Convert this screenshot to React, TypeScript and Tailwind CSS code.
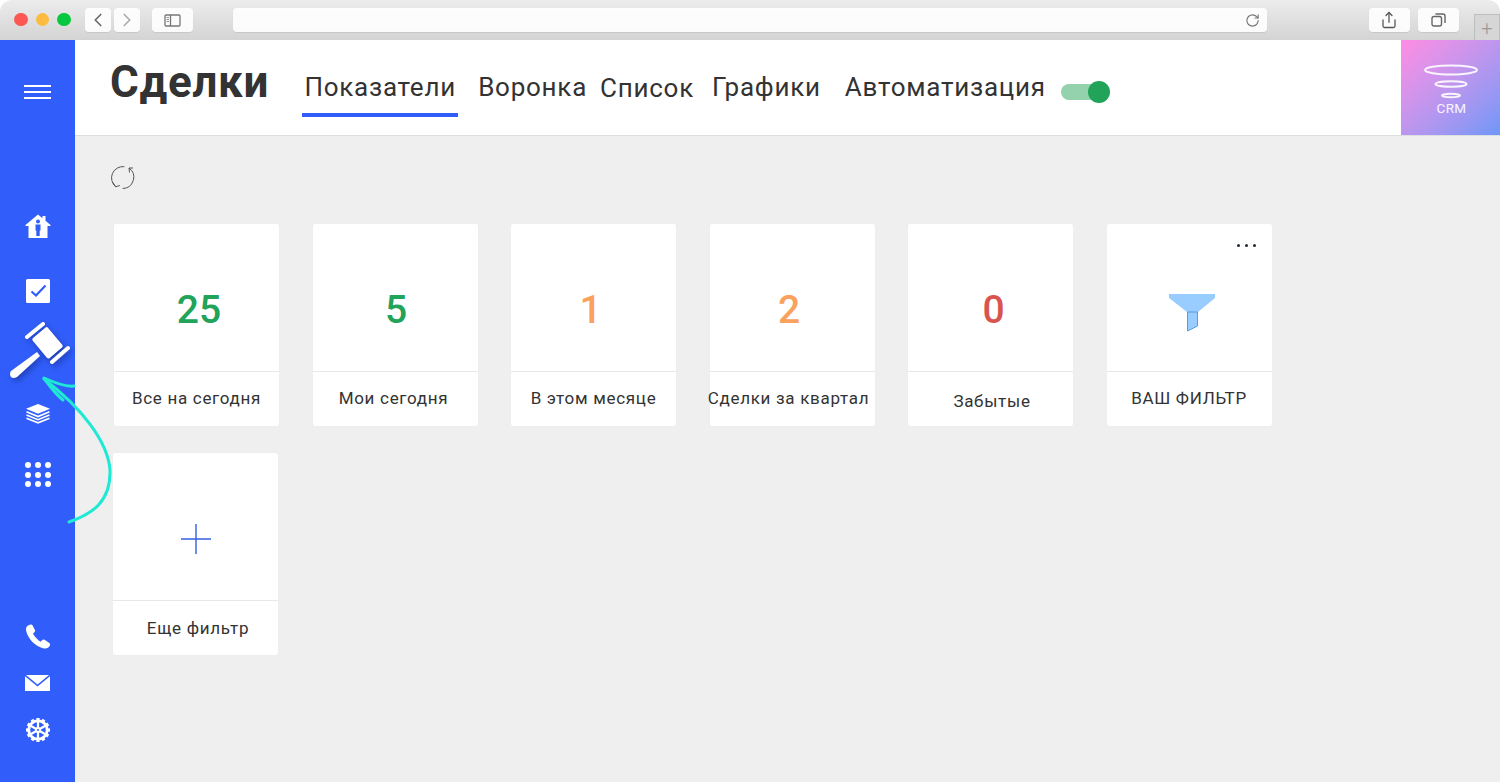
import React from "react";
import { ChevronLeft, ChevronRight, RotateCw, Share } from "lucide-react";

const cards = [
  { n: "25", c: "text-[#21a35a]", label: "Все на сегодня", nx: "ml-[5px]", lx: "" },
  { n: "5", c: "text-[#21a35a]", label: "Мои сегодня", nx: "ml-[2px]", lx: "pr-[3px]" },
  { n: "1", c: "text-[#f9a15d]", label: "В этом месяце", nx: "mr-[6px]", lx: "" },
  { n: "2", c: "text-[#f9a15d]", label: "Сделки за квартал", nx: "mr-[6px]", lx: "pr-[7px]" },
  { n: "0", c: "text-[#d9534f]", label: "Забытые", nx: "ml-[6px]", lx: "pl-[3px] pt-[5px]" },
];

function ToolBtn({ className, children }: { className: string; children: React.ReactNode }) {
  return (
    <div className={"flex items-center justify-center rounded-[4px] bg-white/90 h-[24px] shadow-[0_1px_1px_rgba(0,0,0,0.08)] " + className}>
      {children}
    </div>
  );
}

function Card({ top, label, labelClass = "" }: { top: React.ReactNode; label: string; labelClass?: string }) {
  return (
    <div className="w-[165px] h-[202px] bg-white rounded-[2px] flex flex-col shadow-[0_0_1px_rgba(0,0,0,0.05)]">
      <div className="h-[148px] border-b border-[#e8e8e8] flex items-center justify-center relative">{top}</div>
      <div className={"flex-1 flex items-center justify-center text-[17px] tracking-[0.7px] text-[#333] whitespace-nowrap " + labelClass}>
        {label}
      </div>
    </div>
  );
}

export default function App() {
  return (
    <div className="w-[1500px] h-[782px] overflow-hidden bg-white flex flex-col font-['Roboto',sans-serif]">
      {/* browser bar */}
      <div className="h-[40px] shrink-0 rounded-t-[12px] bg-gradient-to-b from-[#ececec] to-[#d4d4d4] flex items-center pl-[14px] pr-[12px] relative">
        <div className="flex gap-[8px] -mt-[1px]">
          <div className="w-[13.500px] h-[13.500px] rounded-full bg-[#fc5753]" />
          <div className="w-[13.500px] h-[13.500px] rounded-full bg-[#fdbc40]" />
          <div className="w-[13.500px] h-[13.500px] rounded-full bg-[#05c840]" />
        </div>
        <div className="flex gap-[3px] ml-[14px]">
          <ToolBtn className="w-[26px]"><ChevronLeft size={22} strokeWidth={1.8} className="text-[#666]" /></ToolBtn>
          <ToolBtn className="w-[26px]"><ChevronRight size={22} strokeWidth={1.8} className="text-[#aaa]" /></ToolBtn>
        </div>
        <ToolBtn className="w-[41px] ml-[12px]">
          <svg width="17" height="13" viewBox="0 0 17 13" fill="none" stroke="#777" strokeWidth="1.3">
            <rect x="1" y="1" width="15" height="11" rx="1" />
            <path d="M6.500 1v11" />
            <path d="M2.500 3.500h2.500M2.500 5.500h2.500M2.500 7.500h2.500" strokeWidth="0.8" />
          </svg>
        </ToolBtn>
        <ToolBtn className="w-[1034px] ml-[40px] justify-end pr-[7px]">
          <RotateCw size={15} strokeWidth={1.8} className="text-[#777]" />
        </ToolBtn>
        <ToolBtn className="w-[41px] ml-[102px]"><Share size={18} strokeWidth={1.7} className="text-[#555]" /></ToolBtn>
        <ToolBtn className="w-[41px] ml-[8px]">
          <svg width="15" height="14" viewBox="0 0 15 14" fill="none" stroke="#666" strokeWidth="1.4">
            <rect x="1" y="3.500" width="9.500" height="9.500" rx="2" />
            <path d="M4.500 1h7.500a2 2 0 0 1 2 2v7" />
          </svg>
        </ToolBtn>
        <div className="absolute right-0 bottom-0 w-[26px] h-[26px] border border-b-0 border-[#bdbdbd] bg-[#d6d6d6] flex items-center justify-center text-[#999] text-[20px] font-light leading-none">
          +
        </div>
      </div>

      <div className="flex-1 flex min-h-0 relative">
        {/* sidebar */}
        <aside className="w-[75px] shrink-0 bg-[#315efb] flex flex-col items-center relative">
          <div className="mt-[45px] flex flex-col gap-[4px] w-[27px]">
            <div className="h-[2px] bg-white" />
            <div className="h-[2px] bg-white" />
            <div className="h-[2px] bg-white" />
          </div>
          {/* home */}
          <svg className="mt-[115px]" width="26" height="25" viewBox="0 0 26 25" fill="white">
            <path d="M13 0.500 L17.500 4.200V2H20.500V6.700L25.500 11V12H22.500V24H3.500V12H0.500V11Z" />
            <circle cx="13" cy="7.500" r="2" fill="#315efb" />
            <path d="M10.500 10.500h5v6h-.8v5.500h-3.400v-5.500h-.8Z" fill="#315efb" />
          </svg>
          {/* check */}
          <svg className="mt-[40px]" width="24" height="24" viewBox="0 0 24 24">
            <rect x="0" y="0" width="24" height="24" rx="1.500" fill="white" />
            <path d="M5.500 12.500l4.500 4L19.500 6.500" fill="none" stroke="#315efb" strokeWidth="2.200" />
          </svg>
          {/* gavel */}
          <svg className="mt-[16px] ml-[7px] drop-shadow-[2px_3px_3px_rgba(0,0,40,0.35)]" width="66" height="64" viewBox="0 0 66 64" fill="white">
            <path d="M29 33 L32 37 L9 58 Q5 60 3 58 Q1 55 3 52Z" />
            <rect x="-10" y="-13" width="20" height="26" rx="2" transform="translate(39.500 23.800) rotate(-40)" />
            <path d="M19 18L35 5" stroke="white" strokeWidth="4" strokeLinecap="round" />
            <path d="M44 43L60 29" stroke="white" strokeWidth="4" strokeLinecap="round" />
          </svg>
          {/* layers */}
          <svg className="mt-[21px]" width="24" height="20" viewBox="0 0 24 20" fill="white">
            <path d="M12 0L24 4.800 12 9.800 0 4.800Z" />
            <path d="M0.500 7.800L12 12.500 23.500 7.800M0.500 11L12 15.700 23.500 11M0.500 14.200L12 18.900 23.500 14.200" fill="none" stroke="white" strokeWidth="1.700" />
          </svg>
          {/* dots */}
          <div className="mt-[38px] grid grid-cols-3 gap-x-[4px] gap-y-[3.500px]">
            {Array.from({ length: 9 }).map((_, i) => (
              <div key={i} className="w-[6px] h-[6px] rounded-full bg-white" />
            ))}
          </div>
          {/* phone */}
          <svg className="mt-[137px]" width="25" height="25" viewBox="0 0 25 25" fill="white">
            <path d="M6 .500C3 1 1 2.500 1 5c0 4 3 9.500 7 13.500 4 3.500 9 6 12 6 2.500 0 4.500-1.500 5-3.500.2-1-.3-1.700-1-2.200l-4.500-3c-.8-.5-1.600-.4-2.200.2l-1.800 1.800c-2.500-1.500-6-5-7.500-8l1.600-1.700c.6-.6.7-1.500.3-2.200L7.500 1.200C7.200.7 6.700.4 6 .5Z" />
          </svg>
          {/* mail */}
          <svg className="mt-[26px]" width="25" height="16" viewBox="0 0 25 16" fill="white">
            <path d="M1 0H24L12.500 9.500Z" />
            <path d="M0 1.200L12.500 11.500 25 1.200V16H0Z" />
          </svg>
          {/* gear */}
          <svg className="mt-[27px]" width="24" height="24" viewBox="0 0 24 24" fill="none">
            <circle cx="12" cy="12" r="9.200" stroke="white" strokeWidth="2.800" />
            {Array.from({ length: 12 }).map((_, i) => (
              <rect key={i} x="10.400" y="0" width="3.200" height="3.500" fill="white" transform={`rotate(${i * 30} 12 12)`} />
            ))}
            {Array.from({ length: 6 }).map((_, i) => (
              <rect key={i} x="10.900" y="3" width="2.200" height="7" fill="white" transform={`rotate(${i * 60} 12 12)`} />
            ))}
            <circle cx="12" cy="12" r="3" fill="white" />
            <circle cx="12" cy="12" r="1" fill="#315efb" />
          </svg>
        </aside>

        {/* main */}
        <main className="flex-1 flex flex-col bg-[#efefef] min-w-0">
          <header className="h-[96px] shrink-0 bg-white border-b border-[#dcdfdf] flex relative">
            <h1 className="ml-[35px] mt-[14px] text-[44px] leading-[56px] font-bold text-[#333] tracking-[0.7px]">Сделки</h1>
            <nav className="flex text-[26px] leading-[32px] text-[#333] tracking-[0.75px] ml-[33px] relative">
              <div className="w-[156px] h-[77px] flex justify-center pt-[31px] border-b-[4px] border-[#315efb] relative top-0">Показатели</div>
              <div className="ml-[20px] pt-[31px]">Воронка</div>
              <div className="ml-[13px] pt-[32px]">Список</div>
              <div className="ml-[18px] pt-[31px]">Графики</div>
              <div className="ml-[24px] pt-[31px]">Автоматизация</div>
            </nav>
            <div className="ml-[15px] mt-[44px] w-[48px] h-[16px] rounded-full bg-[#93d2ac] relative">
              <div className="absolute -right-[1px] -top-[3px] w-[22px] h-[22px] rounded-full bg-[#21a35a]" />
            </div>
            <div className="ml-auto w-[99px] bg-gradient-to-br from-[#ff8de4] to-[#6e97f7] flex flex-col items-center pt-[24px]">
              <svg width="56" height="36" viewBox="0 0 56 36" fill="none" stroke="white" strokeOpacity="0.9">
                <ellipse cx="28" cy="6" rx="26" ry="4.500" strokeWidth="2" />
                <ellipse cx="28" cy="20" rx="15.500" ry="2.800" strokeWidth="2" />
                <ellipse cx="28" cy="31.500" rx="9" ry="1.800" strokeWidth="2" />
              </svg>
              <div className="text-[13.500px] leading-[15px] text-white/90 tracking-[0.3px] mt-[1px] ml-[2px]">CRM</div>
            </div>
          </header>

          <div className="flex-1 pl-[38px]">
            {/* refresh */}
            <svg className="mt-[29px] -ml-[2px]" width="26" height="26" viewBox="0 0 26 26" fill="none" stroke="#555" strokeWidth="1">
              <path d="M4.500 21.500A11.300 11.300 0 0 1 13.300 1.700" />
              <path d="M2 17.500L4.500 21.800L8.800 20.500" />
              <path d="M18 3A11.300 11.300 0 0 1 11.700 23.500" />
              <path d="M22 3L18 3L18.500 7.500" />
            </svg>
            <div className="mt-[33px] flex gap-[33.500px] ml-[1px]">
              {cards.map((c) => (
                <Card
                  key={c.label}
                  label={c.label}
                  labelClass={c.lx}
                  top={<span className={"text-[39px] font-medium mt-[25px] " + c.c + " " + c.nx}>{c.n}</span>}
                />
              ))}
              <Card
                label="ВАШ ФИЛЬТР"
                top={
                  <>
                    <span className="absolute top-[20px] right-[16px] flex gap-[5px]">
                      <i className="w-[3px] h-[3px] rounded-full bg-[#1f2937]" />
                      <i className="w-[3px] h-[3px] rounded-full bg-[#1f2937]" />
                      <i className="w-[3px] h-[3px] rounded-full bg-[#1f2937]" />
                    </span>
                    <svg className="mt-[30px] ml-[6px]" width="46" height="38" viewBox="0 0 46 38">
                      <path d="M0 0H46V4L29 18H18L0 4Z" fill="#99cdff" />
                      <path d="M18.500 18H28.500V32L18.500 37Z" fill="#99cdff" stroke="#5c9bd8" strokeWidth="1" />
                    </svg>
                  </>
                }
              />
            </div>
            <div className="mt-[27px]">
              <Card
                label="Еще фильтр"
                labelClass="pl-[5px] pt-[2px]"
                top={
                  <svg className="mt-[24px]" width="30" height="30" viewBox="0 0 30 30" stroke="#3560e0" strokeWidth="1.400">
                    <path d="M15 0V30M0 15H30" />
                  </svg>
                }
              />
            </div>
          </div>
        </main>

        {/* annotation arrow */}
        <svg className="absolute left-0 top-0 pointer-events-none" width="130" height="500" viewBox="0 0 130 500" fill="none" stroke="#1fe8d4" strokeLinecap="round" strokeWidth="3">
          <path d="M69 482C92 474 111 462 110 430C108 402 82 368 44 339" />
          <path d="M44 338C55 343 66 347 74 346" />
          <path d="M46 341C52 349 58 356 63 360" />
        </svg>
      </div>
    </div>
  );
}
